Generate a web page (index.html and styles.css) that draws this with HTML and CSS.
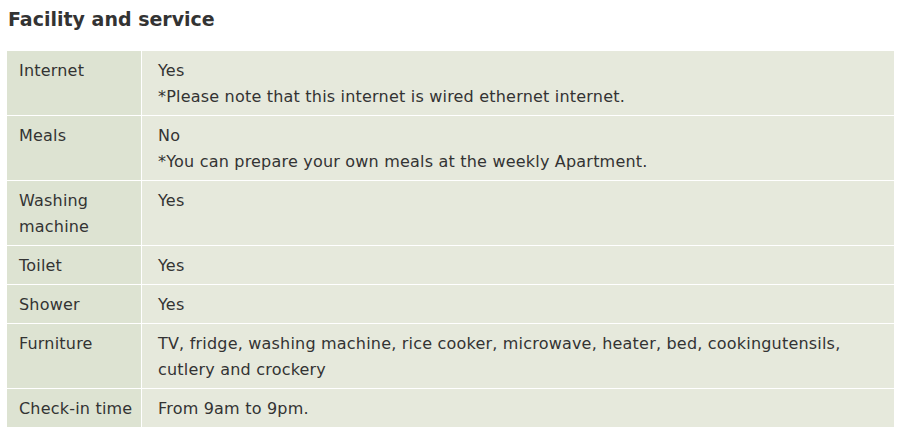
FILE: index.html
```html
<!DOCTYPE html>
<html>
<head>
<meta charset="utf-8">
<link rel="stylesheet" href="styles.css">
</head>
<body>
<h2 class="title">Facility and service</h2>
<table class="facility">
  <tr><th>Internet</th><td>Yes<br>*Please note that this internet is wired ethernet internet.</td></tr>
  <tr><th>Meals</th><td>No<br>*You can prepare your own meals at the weekly Apartment.</td></tr>
  <tr><th>Washing machine</th><td>Yes</td></tr>
  <tr><th>Toilet</th><td>Yes</td></tr>
  <tr><th>Shower</th><td>Yes</td></tr>
  <tr><th>Furniture</th><td>TV, fridge, washing machine, rice cooker, microwave, heater, bed, cookingutensils, cutlery and crockery</td></tr>
  <tr><th>Check-in time</th><td>From 9am to 9pm.</td></tr>
</table>
</body>
</html>
```
FILE: styles.css
```css
body {
  margin: 0;
  padding: 0 13px 0 7px;
  font-family: "DejaVu Sans", Verdana, sans-serif;
  color: #333;
  background: #fff;
}
.title {
  margin: 0;
  padding: 7px 0 0 1px;
  height: 51px;
  box-sizing: border-box;
  font-size: 19px;
  line-height: 24px;
  font-weight: bold;
  color: #333;
}
.facility {
  width: 100%;
  border-collapse: collapse;
  font-size: 16px;
  letter-spacing: 0.2px;
  line-height: 26px;
}
.facility th,
.facility td {
  border: 1px solid #fff;
  padding: 7px 12px 5px 12px;
  vertical-align: top;
  text-align: left;
  font-weight: normal;
}
.facility tr:first-child th,
.facility tr:first-child td { border-top: none; }
.facility tr:last-child th,
.facility tr:last-child td { border-bottom: none; }
.facility th {
  width: 114px;
  padding-right: 8px;
  background: #dde3d2;
  border-left: none;
}
.facility td {
  background: #e6e9dc;
  padding-left: 16px;
  padding-right: 40px;
  border-right: none;
}
```
